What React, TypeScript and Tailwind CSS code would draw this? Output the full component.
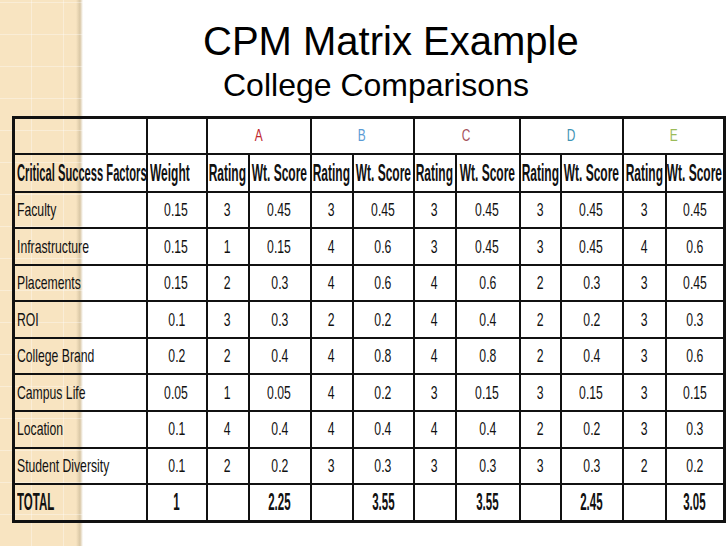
const colWidths = [133, 60, 42, 62, 42, 61, 42, 64, 41, 62, 43, 59];

const colleges = [
  { name: 'A', color: 'text-[#c0282f]' },
  { name: 'B', color: 'text-[#5b9bd5]' },
  { name: 'C', color: 'text-[#a5525c]' },
  { name: 'D', color: 'text-[#3f93b4]' },
  { name: 'E', color: 'text-[#9bbb59]' },
];

const rows: string[][] = [
  ['Faculty', '0.15', '3', '0.45', '3', '0.45', '3', '0.45', '3', '0.45', '3', '0.45'],
  ['Infrastructure', '0.15', '1', '0.15', '4', '0.6', '3', '0.45', '3', '0.45', '4', '0.6'],
  ['Placements', '0.15', '2', '0.3', '4', '0.6', '4', '0.6', '2', '0.3', '3', '0.45'],
  ['ROI', '0.1', '3', '0.3', '2', '0.2', '4', '0.4', '2', '0.2', '3', '0.3'],
  ['College Brand', '0.2', '2', '0.4', '4', '0.8', '4', '0.8', '2', '0.4', '3', '0.6'],
  ['Campus Life', '0.05', '1', '0.05', '4', '0.2', '3', '0.15', '3', '0.15', '3', '0.15'],
  ['Location', '0.1', '4', '0.4', '4', '0.4', '4', '0.4', '2', '0.2', '3', '0.3'],
  ['Student Diversity', '0.1', '2', '0.2', '3', '0.3', '3', '0.3', '3', '0.3', '2', '0.2'],
];

const total = ['TOTAL', '1', '', '2.25', '', '3.55', '', '3.55', '', '2.45', '', '3.05'];

const headers = ['Critical Success Factors', 'Weight', 'Rating', 'Wt. Score', 'Rating', 'Wt. Score', 'Rating', 'Wt. Score', 'Rating', 'Wt. Score', 'Rating', 'Wt. Score'];

const cell = 'border-2 border-[#111] p-0 whitespace-nowrap';

// the slide text is a squeezed Calibri; Liberation Sans narrowed with scale-x gets close
function Squeezed({ text, left, squeeze }: { text: string; left?: boolean; squeeze: string }) {
  return (
    <div className={`flex ${left ? 'justify-start pl-[2px]' : 'justify-center'}`}>
      <span className={`inline-block shrink-0 ${squeeze} ${left ? 'origin-left' : 'origin-center'}`}>{text}</span>
    </div>
  );
}

export default function App() {
  return (
    <div className="w-[728px] h-[546px] overflow-hidden bg-white bg-repeat-y bg-[length:83px_546px] bg-[repeating-linear-gradient(90deg,transparent_0_31px,rgba(255,255,255,0.35)_31px_32px),repeating-linear-gradient(0deg,transparent_0_31px,rgba(255,255,255,0.35)_31px_32px),linear-gradient(to_right,#f8e4c1_0,#f8e4c1_76px,#d9c7a5_80px,#ffffff_83px)]">
      <div className="pt-[18px] pl-[203px] text-[40px] leading-[46px] text-black font-['Liberation_Sans',Arial,sans-serif]">
        CPM Matrix Example
      </div>
      <div className="mt-[3px] pl-[223px] text-[32px] leading-[36px] text-black font-['Liberation_Sans',Arial,sans-serif]">
        College Comparisons
      </div>

      <table className="mt-[13px] ml-[12px] w-[711px] table-fixed border-collapse border-[3px] border-[#111] text-[#111] font-['Liberation_Sans',Arial,sans-serif]">
        <colgroup>
          {colWidths.map((w, i) => (
            <col key={i} style={{ width: w }} />
          ))}
        </colgroup>
        <tbody>
          <tr className="h-[36px]">
            <td className={cell} />
            <td className={cell} />
            {colleges.map((c) => (
              <td key={c.name} colSpan={2} className={`${cell} text-[17px] ${c.color}`}>
                <Squeezed text={c.name} squeeze="scale-x-[0.7]" />
              </td>
            ))}
          </tr>
          <tr className="h-[37px]">
            {headers.map((h, i) => (
              <td key={i} className={`${cell} text-[24px] font-bold`}>
                <Squeezed text={h} left={i < 2} squeeze={i === 0 ? 'scale-x-[0.465]' : 'scale-x-[0.5]'} />
              </td>
            ))}
          </tr>
          {rows.map((r) => (
            <tr key={r[0]} className="h-[36.6px]">
              {r.map((v, i) => (
                <td key={i} className={`${cell} text-[18.5px]`}>
                  <Squeezed text={v} left={i === 0} squeeze="scale-x-[0.66]" />
                </td>
              ))}
            </tr>
          ))}
          <tr className="h-[36.6px]">
            {total.map((v, i) => (
              <td key={i} className={`${cell} text-[23px] font-bold`}>
                {v && <Squeezed text={v} left={i === 0} squeeze="scale-x-[0.5]" />}
              </td>
            ))}
          </tr>
        </tbody>
      </table>
    </div>
  );
}
